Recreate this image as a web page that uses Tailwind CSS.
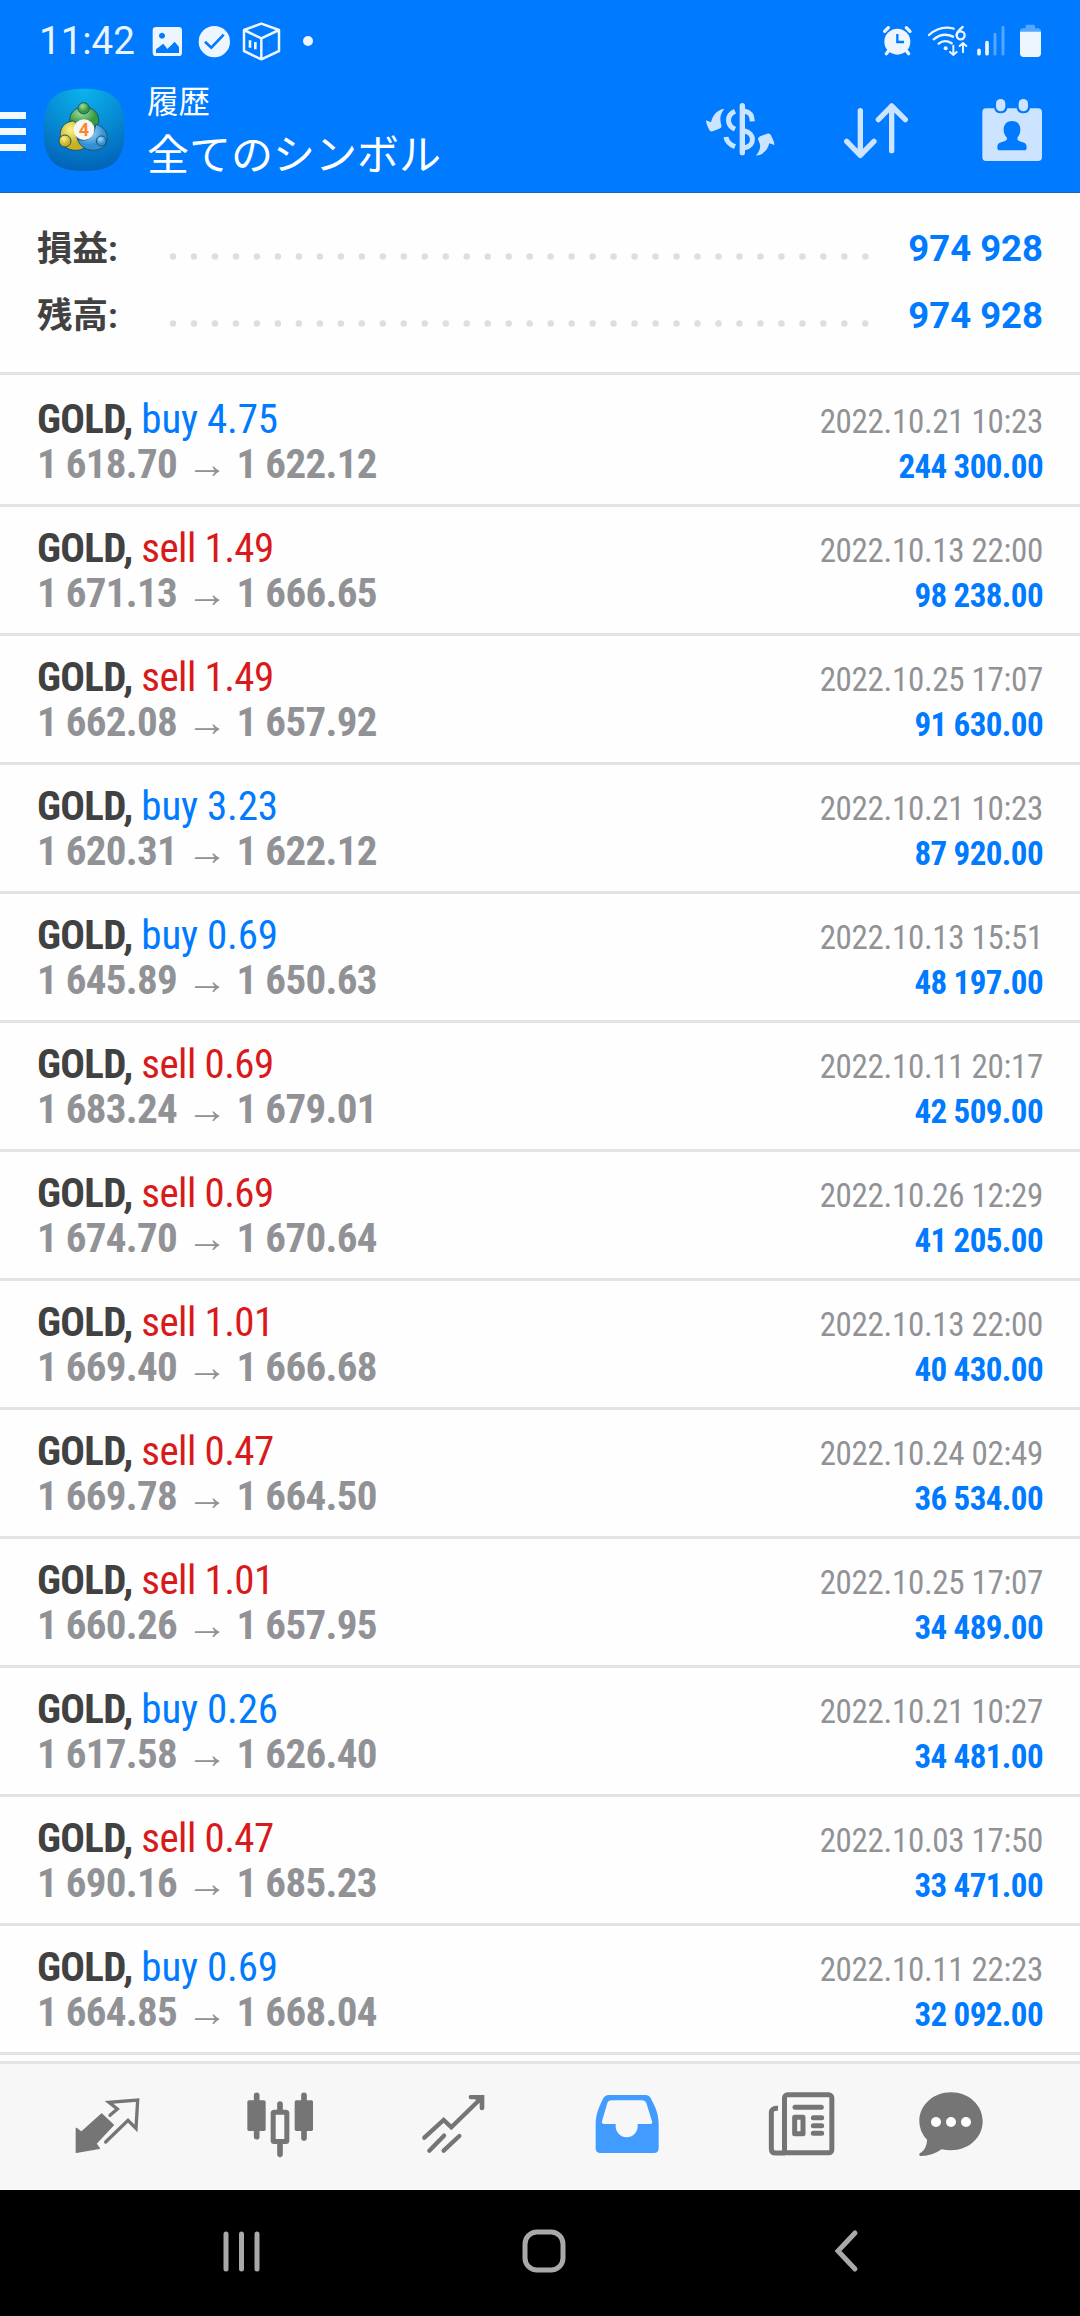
<!DOCTYPE html>
<html lang="ja">
<head>
    <meta charset="UTF-8">
    <meta name="viewport" content="width=device-width, initial-scale=1.0">
    <title>履歴 - 全てのシンボル</title>
    <script src="https://cdn.jsdelivr.net/npm/@tailwindcss/browser@4"></script>
</head>
<body class="w-[1080px] h-[2316px] overflow-hidden flex flex-col bg-[#fefefe] font-[Roboto,'Noto_Sans_CJK_JP',sans-serif]">

    <header class="h-[193px] shrink-0 bg-[#007aff] border-b border-[#1565c0] text-white">
        <!-- Status bar -->
        <div class="h-[82px] flex items-center pl-[39px] pr-[37px]">
            <span class="text-[38.5px] leading-none w-[113px] text-[#eaf4ff]">11:42</span>
            <svg class="w-[31px] h-[39px]" viewBox="36 18 93 117">
                <path fill="#edf5ff" fill-rule="evenodd" d="M48 33h68q10 0 10 10v67q0 10-10 10H48q-10 0-10-10V43q0-10 10-10zM48 111h69V93l-13-16-22 22-12-16-22 17zM66 50a9 9 0 1 0 .1 0z"/>
            </svg>
            <svg class="w-[33px] h-[39px] ml-[15px]" viewBox="174 18 99 117">
                <circle cx="223" cy="77" r="47" fill="#edf5ff"/>
                <path fill="none" stroke="#007aff" stroke-width="8" d="M195 77l19 18 37-39"/>
            </svg>
            <svg class="w-[39px] h-[39px] ml-[11px]" viewBox="306 18 117 117">
                <path fill="none" stroke="#edf5ff" stroke-width="7.5" stroke-linejoin="round" d="M364 23l53 19v63l-53 25-52-25V42zM312 42l52 25 53-25M364 67v63"/>
                <path fill="none" stroke="#edf5ff" stroke-width="8" d="M330 73v22M346 78v22"/>
            </svg>
            <svg class="w-[12px] h-[39px] ml-[21px]" viewBox="486 18 36 117">
                <circle cx="504" cy="75" r="15" fill="#edf5ff"/>
            </svg>
            <svg class="w-[33px] h-[36px] ml-auto" viewBox="573 24 99 108">
                <circle cx="622" cy="80" r="39" fill="#edf5ff"/>
                <path stroke="#edf5ff" stroke-width="10" stroke-linecap="round" d="M584 49l11-11M660 49l-11-11M597 106l-8 10M648 106l8 10"/>
                <path fill="none" stroke="#007aff" stroke-width="7" d="M622 57v24h20"/>
            </svg>
            <svg class="w-[41px] h-[36px] ml-[13px]" viewBox="711 24 123 108">
                <g fill="none" stroke="#edf5ff" stroke-width="7" stroke-linecap="round">
                    <path d="M717 60q34-30 74-19M731 73q28-23 58-8M746 86q18-15 39-1"/>
                    <path d="M818 36q-18 14-18 25"/>
                    <circle cx="812" cy="61" r="12"/>
                    <path stroke-width="6" d="M790 92v27M780 111l10 9 10-9M819 112V85M809 93l10-9 10 9"/>
                </g>
                <circle cx="767" cy="100" r="6" fill="#edf5ff"/>
            </svg>
            <svg class="w-[30px] h-[36px] ml-[8px]" viewBox="858 24 90 108">
                <path stroke="#edf5ff" stroke-width="11" stroke-linecap="round" d="M867 106v10M891 83v33"/>
                <path stroke="#55a6ff" stroke-width="9" stroke-linecap="round" d="M915 58v59M939 37v80"/>
            </svg>
            <svg class="w-[25px] h-[36px] ml-[12px]" viewBox="984 24 75 108">
                <path fill="#55a6ff" d="M1007 33q0-4 4-4h20q4 0 4 4v7h8q10 0 10 8v6h-63v-6q0-8 10-8h7z"/>
                <path fill="#edf5ff" d="M990 50h63v65q0 11-11 11h-41q-11 0-11-11z"/>
            </svg>
        </div>

        <!-- App bar -->
        <div class="h-[95px] flex items-center pr-9">
            <div class="w-[26px] flex flex-col gap-[9px] mt-[4px]">
                <span class="h-[7px] bg-[#f2f8ff]"></span>
                <span class="h-[7px] bg-[#f2f8ff]"></span>
                <span class="h-[7px] bg-[#f2f8ff]"></span>
            </div>
            <svg class="w-[82px] h-[84px] ml-[17px]" viewBox="38 23 246 252">
                <defs>
                    <radialGradient id="bg" cx=".5" cy="0" r="1"><stop offset="0" stop-color="#0bb4ec"/><stop offset=".55" stop-color="#0789d2"/><stop offset="1" stop-color="#0263b8"/></radialGradient>
                    <radialGradient id="gr" cx=".4" cy=".3"><stop offset="0" stop-color="#a4e09c"/><stop offset="1" stop-color="#38993f"/></radialGradient>
                    <radialGradient id="ye" cx=".4" cy=".3"><stop offset="0" stop-color="#fbf38a"/><stop offset="1" stop-color="#c9b124"/></radialGradient>
                    <radialGradient id="bl" cx=".4" cy=".3"><stop offset="0" stop-color="#a5dcfa"/><stop offset="1" stop-color="#3390d4"/></radialGradient>
                </defs>
                <path fill="url(#bg)" d="M161 25c88 0 121 30 121 123s-33 124-121 124S40 241 40 148 73 25 161 25z"/>
                <g stroke="#1a5570" stroke-width="3">
                    <path fill="url(#gr)" d="M118 125c-2-29 18-45 43-45s46 16 44 46q-5 12-17 14-27-30-54 0-13-3-16-15z"/>
                    <path fill="url(#ye)" d="M127 122c-26 3-40 24-37 46-5 22 18 42 46 42 12 0 25-4 30-11-20-8-34-30-27-54 3-14-2-20-12-23z"/>
                    <path fill="url(#bl)" d="M196 132c24 5 38 26 34 48-2 22-26 33-50 29-20-3-34-16-38-33 22 8 48 4 54-44z"/>
                    <circle cx="160" cy="84" r="17" fill="url(#gr)"/>
                    <circle cx="104" cy="182" r="18" fill="url(#ye)"/>
                    <circle cx="213" cy="182" r="15" fill="url(#bl)"/>
                </g>
                <circle cx="161" cy="148" r="31" fill="#f7f5f5"/>
                <text x="161" y="167" text-anchor="middle" font-family="Roboto" font-weight="700" font-size="54" fill="#f58a2a">4</text>
            </svg>
            <div class="ml-[22px] mb-[4px] whitespace-nowrap font-['Noto_Sans_CJK_JP',sans-serif]">
                <p class="text-[31.5px] h-[48px] leading-[48px]">履歴</p>
                <p class="text-[42px] h-[58px] leading-[58px]">全てのシンボル</p>
            </div>
            <svg class="w-[72px] h-[64px] ml-auto" viewBox="42 246 216 192">
                <path fill="#cce4ff" d="M103 278c-12 16-15 28-9 49 2 8-2 10-10 13l-16 6c-7 1-9-2-12-8-5-10-8-18-8-25l15 6c5-22 20-39 40-41z"/>
                <path fill="#cce4ff" d="M198 419c12-16 17-27 7-46-3-8 2-11 10-14l17-6c7-1 10 2 13 9 5 9 8 16 8 25l-15-5c-5 20-18 35-40 37z"/>
                <g fill="none" stroke="#cce4ff" stroke-width="15">
                    <path stroke-linecap="round" stroke-width="16" d="M157 269v141"/>
                    <path d="M135 286c-26 12-26 41 0 54M108 363c2 15 12 23 27 29"/>
                    <path d="M164 286c14 2 22 9 23 30M164 345c30 6 32 45 0 50"/>
                </g>
            </svg>
            <svg class="w-[68px] h-[64px] ml-[66px]" viewBox="456 246 204 192">
                <path fill="none" stroke="#cce4ff" stroke-width="16" stroke-linecap="round" stroke-linejoin="round" d="M511 284v134M470 376l41 42 41-42M605 404V270M565 311l40-41 41 41"/>
            </svg>
            <svg class="w-[64px] h-[64px] ml-[70px]" viewBox="870 246 192 192">
                <path fill="#cce4ff" d="M888 277h25q1 15 19 15t20-15h28q2 15 20 15t20-15h24q12 0 12 12v134q0 12-12 12H888q-11 0-11-12V289q0-12 11-12z"/>
                <rect x="918" y="249" width="28" height="37" rx="14" fill="#cce4ff"/>
                <rect x="986" y="249" width="28" height="37" rx="14" fill="#cce4ff"/>
                <path fill="#007aff" d="M966 315c18 0 25 12 25 27 0 12-6 18-9 24 0 8 4 9 14 12 11 3 14 7 14 17q0 8-8 8h-72q-8 0-8-8c0-10 3-14 14-17 10-3 15-4 15-12-4-6-10-12-10-24 0-15 7-27 25-27z"/>
            </svg>
        </div>
    </header>

    <!-- Totals -->
    <section class="h-[182px] shrink-0 border-b-[3px] border-[#e3e3e3] px-[37px] pt-[23px]">
        <div class="h-[67px] flex items-center">
            <span class="w-[132px] text-[35.5px] leading-none font-bold text-[#414141]">損益:</span>
            <svg class="w-[700px] h-[7px] mt-[13px]"><line x1="4" y1="3.5" x2="698" y2="3.5" stroke="#dedede" stroke-width="6.5" stroke-linecap="round" stroke-dasharray="0 20.98"/></svg>
            <span class="ml-auto text-[36.5px] leading-none font-bold text-[#007aff]">974 928</span>
        </div>
        <div class="h-[67px] flex items-center">
            <span class="w-[132px] text-[35.5px] leading-none font-bold text-[#414141]">残高:</span>
            <svg class="w-[700px] h-[7px] mt-[13px]"><line x1="4" y1="3.5" x2="698" y2="3.5" stroke="#dedede" stroke-width="6.5" stroke-linecap="round" stroke-dasharray="0 20.98"/></svg>
            <span class="ml-auto text-[36.5px] leading-none font-bold text-[#007aff]">974 928</span>
        </div>
    </section>

    <!-- Deals -->
    <main id="deals" class="h-[1686px] shrink-0 pt-[3px] overflow-hidden [font-stretch:75%]"></main>

    <!-- Tabs -->
    <nav class="h-[129px] shrink-0 flex items-center bg-[#f7f7f7] border-t-[3px] border-[#e3e3e3] pl-[74px] pb-1">
        <svg class="w-[67px] h-[70px]" viewBox="132 60 201 210">
            <path fill="#757575" stroke="#757575" stroke-width="4" stroke-linejoin="round" d="M215 132l35 33-52 56 10 14-69 12v-72l15 12z"/>
            <path fill="none" stroke="#757575" stroke-width="10" stroke-linecap="round" d="M240 136l22-19-25-20 86-7-5 85-24-24-67 65"/>
        </svg>
        <svg class="w-[70px] h-[70px] ml-[104px]" viewBox="645 60 210 210">
            <path stroke="#757575" stroke-width="17" stroke-linecap="round" d="M680 76v124M822 76v128M750 102v20M750 220v33"/>
            <rect x="652" y="91" width="55" height="92" rx="5" fill="#757575"/>
            <rect x="794" y="91" width="55" height="92" rx="5" fill="#757575"/>
            <rect x="729.5" y="126.5" width="41" height="88" rx="3" fill="#f7f7f7" stroke="#757575" stroke-width="15"/>
        </svg>
        <svg class="w-[65px] h-[70px] ml-[106px]" viewBox="1173 60 195 210">
            <path fill="none" stroke="#757575" stroke-width="13" stroke-linecap="round" d="M1183 203l58-53 23 22 87-85M1198 242l44-45M1241 242l47-44"/>
            <path fill="#757575" d="M1322 75h41v39q0 7-7 7t-7-7v-15l-14-11h-13q-6 0-6-7t6-6z"/>
        </svg>
        <svg class="w-[66px] h-[70px] ml-[108px]" viewBox="72 60 198 210">
            <path fill="#429bff" fill-rule="evenodd" d="M117 75h109q11 0 16 9c12 24 23 42 24 77v74q0 14-14 14H91q-14 0-14-14v-74c1-33 12-53 23-77q6-9 17-9zM125 91q-10 0-13 8l-16 55q-2 8 6 8h35v7a33 33 0 0 0 66 0v-7h37q9 0 6-8l-17-55q-3-8-12-8z"/>
        </svg>
        <svg class="w-[68px] h-[70px] ml-[108px]" viewBox="594 60 204 210">
            <g fill="none" stroke="#757575" stroke-width="15" stroke-linecap="round">
                <rect x="643.5" y="74.5" width="142" height="174" rx="9"/>
                <path stroke-linecap="butt" d="M624 115q-20-1-20 13v108q0 13 13 13h30"/>
                <path d="M675 112h79M730 143h25M730 167h25M730 190h25"/>
                <path stroke-linecap="butt" stroke-linejoin="round" d="M674 142h25v49h-25z"/>
            </g>
        </svg>
        <svg class="w-[66px] h-[70px] ml-[82px]" viewBox="1044 60 198 210">
            <path fill="#757575" d="M1143 67c53 0 95 38 95 87s-42 87-95 87q-15 0-28-3-30 21-63 20-8-3-2-8c15-10 21-25 21-41q-23-23-23-55c0-49 42-87 95-87z"/>
            <circle cx="1098" cy="156" r="15" fill="#fff"/><circle cx="1143" cy="156" r="15" fill="#fff"/><circle cx="1188" cy="156" r="15" fill="#fff"/>
        </svg>
    </nav>

    <!-- Android navigation -->
    <div class="flex-1 bg-black flex items-center pb-[5px] pl-[221px]">
        <svg class="w-[42px] h-[46px]" viewBox="0 0 42 46"><path stroke="#a9a9a9" stroke-width="5" stroke-linecap="round" d="M5 6v35M20.5 6v35M36 6v35"/></svg>
        <svg class="w-[46px] h-[46px] ml-[258px]" viewBox="0 0 46 46"><rect x="4" y="4" width="38" height="38" rx="12" fill="none" stroke="#a9a9a9" stroke-width="5"/></svg>
        <svg class="w-[30px] h-[46px] ml-[264px]" viewBox="0 0 30 46"><path fill="none" stroke="#a9a9a9" stroke-width="5" stroke-linecap="round" d="M24 5L7 23 24 41"/></svg>
    </div>

    <script>
        const deals = [
            ['buy', '4.75', '1 618.70', '1 622.12', '2022.10.21 10:23', '244 300.00'],
            ['sell', '1.49', '1 671.13', '1 666.65', '2022.10.13 22:00', '98 238.00'],
            ['sell', '1.49', '1 662.08', '1 657.92', '2022.10.25 17:07', '91 630.00'],
            ['buy', '3.23', '1 620.31', '1 622.12', '2022.10.21 10:23', '87 920.00'],
            ['buy', '0.69', '1 645.89', '1 650.63', '2022.10.13 15:51', '48 197.00'],
            ['sell', '0.69', '1 683.24', '1 679.01', '2022.10.11 20:17', '42 509.00'],
            ['sell', '0.69', '1 674.70', '1 670.64', '2022.10.26 12:29', '41 205.00'],
            ['sell', '1.01', '1 669.40', '1 666.68', '2022.10.13 22:00', '40 430.00'],
            ['sell', '0.47', '1 669.78', '1 664.50', '2022.10.24 02:49', '36 534.00'],
            ['sell', '1.01', '1 660.26', '1 657.95', '2022.10.25 17:07', '34 489.00'],
            ['buy', '0.26', '1 617.58', '1 626.40', '2022.10.21 10:27', '34 481.00'],
            ['sell', '0.47', '1 690.16', '1 685.23', '2022.10.03 17:50', '33 471.00'],
            ['buy', '0.69', '1 664.85', '1 668.04', '2022.10.11 22:23', '32 092.00'],
        ];

        const sideStyle = {
            buy: 'text-[#007aff] tracking-[-0.2px]',
            sell: 'text-[#d91a1a] tracking-[-0.6px]',
        };

        document.getElementById('deals').innerHTML = deals.map(([side, volume, open, close, time, profit]) => `
            <div class="h-[129px] border-b-[3px] border-[#e3e3e3] px-[37px] pt-[19px] whitespace-nowrap">
                <div class="h-[45px] leading-[45px] flex items-baseline justify-between">
                    <span class="text-[41px] tracking-[-0.7px]"><b class="font-bold text-[#414141]">GOLD,</b> <span class="${sideStyle[side]}">${side} ${volume}</span></span>
                    <span class="text-[33px] tracking-[-0.3px] text-[#919296]">${time}</span>
                </div>
                <div class="h-[45px] leading-[45px] flex items-baseline justify-between font-bold">
                    <span class="text-[41px] tracking-[-0.7px] text-[#919296]">${open} <span class="inline-block w-[42px] text-center font-[Roboto]">→</span> ${close}</span>
                    <span class="text-[33px] tracking-[-0.6px] text-[#007aff]">${profit}</span>
                </div>
            </div>`).join('');
    </script>
</body>
</html>
